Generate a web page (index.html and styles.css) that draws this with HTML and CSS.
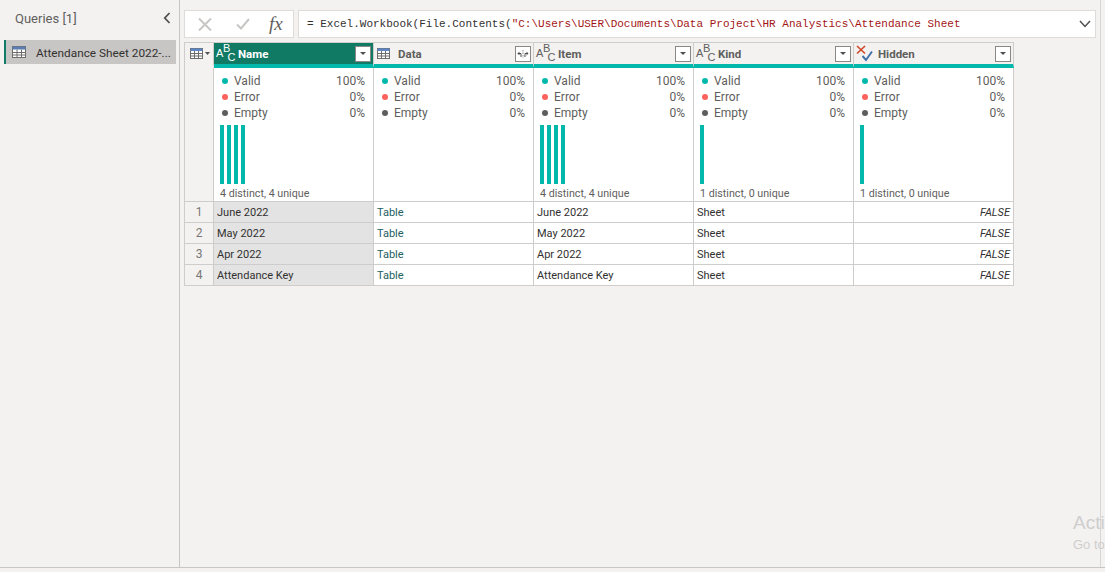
FILE: index.html
```html
<!DOCTYPE html>
<html lang="en">
<head>
  <meta charset="UTF-8" />
  <title>Power Query Editor</title>
  <link rel="stylesheet" href="styles.css">
</head>
<body>

  <div class="editor">
    <aside class="queries">
      <div class="queries-head">
        <span>Queries [1]</span>
        <svg class="collapse" width="8" height="12" viewBox="0 0 8 12"><path d="M6.5 1 L1.8 6 L6.5 11" fill="none" stroke="#505050" stroke-width="1.8"/></svg>
      </div>
      <div class="query-item">
        <svg class="table-icon" width="14" height="12" viewBox="0 0 14 12"><rect x="0.5" y="0.5" width="13" height="11" fill="#fff" stroke="#6d6d6d"/><rect x="0.5" y="0.5" width="13" height="3" fill="#5b7db1"/><path d="M0.5 6.5H13.5M0.5 9H13.5M5 3.5V11.5M9.5 3.5V11.5" stroke="#6d6d6d" stroke-width="1" fill="none"/></svg>
        <span class="query-name">Attendance Sheet 2022-...</span>
      </div>
    </aside>

    <main class="content">
      <div class="formula-bar">
        <div class="formula-buttons">
          <svg class="btn-cancel" width="14" height="13" viewBox="0 0 14 13"><path d="M1 0.5 L13 12.5 M13 0.5 L1 12.5" stroke="#c8c6c4" stroke-width="2"/></svg>
          <svg class="btn-ok" width="14" height="12" viewBox="0 0 14 12"><path d="M1 6.5 L5 10.5 L13 1" fill="none" stroke="#c8c6c4" stroke-width="2"/></svg>
          <span class="fx">fx</span>
        </div>
        <div class="formula-input">
          <span class="formula-text">= Excel.Workbook(File.Contents(<span class="str">"C:\Users\USER\Documents\Data Project\HR Analystics\Attendance Sheet</span></span>
          <svg width="12" height="8" viewBox="0 0 12 8"><path d="M1 1 L6 6.5 L11 1" fill="none" stroke="#505050" stroke-width="1.5"/></svg>
        </div>
      </div>

      <div class="grid">
        <!-- header row -->
        <div class="corner">
          <svg width="13" height="11" viewBox="0 0 13 11"><rect x="0.5" y="0.5" width="12" height="10" fill="#fff" stroke="#6d6d6d"/><rect x="0.5" y="0.5" width="12" height="2.5" fill="#5f86c4"/><path d="M0.5 5.5H12.5M0.5 8H12.5M4.5 3V10.5M8.5 3V10.5" stroke="#6d6d6d" fill="none"/></svg>
          <svg width="5" height="3" viewBox="0 0 5 3"><path d="M0 0H5L2.5 3Z" fill="#505050"/></svg>
        </div>
        <div class="col-head selected">
          <span class="abc"><i>A</i><i class="b">B</i><i class="c">C</i></span>
          <span class="col-name">Name</span>
          <span class="filter"><b></b></span>
        </div>
        <div class="col-head">
          <svg class="type-icon" width="13" height="11" viewBox="0 0 13 11"><rect x="0.5" y="0.5" width="12" height="10" fill="#fff" stroke="#6d6d6d"/><rect x="0.5" y="0.5" width="12" height="2.5" fill="#5f86c4"/><path d="M0.5 5.5H12.5M0.5 8H12.5M4.5 3V10.5M8.5 3V10.5" stroke="#6d6d6d" fill="none"/></svg>
          <span class="col-name">Data</span>
          <span class="filter expand">
            <svg width="12" height="8" viewBox="0 0 12 8"><path d="M4 7V3.5H1M2.6 1.9L1 3.5L2.6 5.1M8 7V3.5H11M9.4 1.9L11 3.5L9.4 5.1" fill="none" stroke="#505050"/><path d="M6 0V8" stroke="#8a8886" stroke-dasharray="1.5 1"/></svg>
          </span>
        </div>
        <div class="col-head">
          <span class="abc"><i>A</i><i class="b">B</i><i class="c">C</i></span>
          <span class="col-name">Item</span>
          <span class="filter"><b></b></span>
        </div>
        <div class="col-head">
          <span class="abc"><i>A</i><i class="b">B</i><i class="c">C</i></span>
          <span class="col-name">Kind</span>
          <span class="filter"><b></b></span>
        </div>
        <div class="col-head">
          <svg class="bool" width="17" height="17" viewBox="0 0 17 17"><path d="M1 1 L9 8.5 M9 1 L1 8.5" stroke="#d2492a" stroke-width="1.7"/><path d="M6.5 11 L10 15 L16 6.5" fill="none" stroke="#3f6fa8" stroke-width="1.9"/></svg>
          <span class="col-name">Hidden</span>
          <span class="filter"><b></b></span>
        </div>

        <!-- profile row -->
        <div class="row-num"></div>
        <div class="profile">
          <div class="quality"><span class="dot valid"></span>Valid<em>100%</em></div>
          <div class="quality"><span class="dot error"></span>Error<em>0%</em></div>
          <div class="quality"><span class="dot empty"></span>Empty<em>0%</em></div>
          <div class="bars"><s></s><s></s><s></s><s></s></div>
          <div class="distinct">4 distinct, 4 unique</div>
        </div>
        <div class="profile">
          <div class="quality"><span class="dot valid"></span>Valid<em>100%</em></div>
          <div class="quality"><span class="dot error"></span>Error<em>0%</em></div>
          <div class="quality"><span class="dot empty"></span>Empty<em>0%</em></div>
        </div>
        <div class="profile">
          <div class="quality"><span class="dot valid"></span>Valid<em>100%</em></div>
          <div class="quality"><span class="dot error"></span>Error<em>0%</em></div>
          <div class="quality"><span class="dot empty"></span>Empty<em>0%</em></div>
          <div class="bars"><s></s><s></s><s></s><s></s></div>
          <div class="distinct">4 distinct, 4 unique</div>
        </div>
        <div class="profile">
          <div class="quality"><span class="dot valid"></span>Valid<em>100%</em></div>
          <div class="quality"><span class="dot error"></span>Error<em>0%</em></div>
          <div class="quality"><span class="dot empty"></span>Empty<em>0%</em></div>
          <div class="bars"><s></s></div>
          <div class="distinct">1 distinct, 0 unique</div>
        </div>
        <div class="profile">
          <div class="quality"><span class="dot valid"></span>Valid<em>100%</em></div>
          <div class="quality"><span class="dot error"></span>Error<em>0%</em></div>
          <div class="quality"><span class="dot empty"></span>Empty<em>0%</em></div>
          <div class="bars"><s></s></div>
          <div class="distinct">1 distinct, 0 unique</div>
        </div>

        <!-- data rows -->
        <div class="row-num">1</div>
        <div class="cell name">June 2022</div>
        <div class="cell link">Table</div>
        <div class="cell">June 2022</div>
        <div class="cell">Sheet</div>
        <div class="cell bool-val">FALSE</div>

        <div class="row-num">2</div>
        <div class="cell name">May 2022</div>
        <div class="cell link">Table</div>
        <div class="cell">May 2022</div>
        <div class="cell">Sheet</div>
        <div class="cell bool-val">FALSE</div>

        <div class="row-num">3</div>
        <div class="cell name">Apr 2022</div>
        <div class="cell link">Table</div>
        <div class="cell">Apr 2022</div>
        <div class="cell">Sheet</div>
        <div class="cell bool-val">FALSE</div>

        <div class="row-num">4</div>
        <div class="cell name">Attendance Key</div>
        <div class="cell link">Table</div>
        <div class="cell">Attendance Key</div>
        <div class="cell">Sheet</div>
        <div class="cell bool-val">FALSE</div>
      </div>
    </main>
  </div>

  <div class="watermark">
    <div class="wm-title">Acti</div>
    <div class="wm-sub">Go to</div>
  </div>

</body>
</html>
```

FILE: styles.css
```css
* {
  box-sizing: border-box;
}

html,
body {
  height: 100%;
}

body {
  margin: 0;
  background: #f3f2f1;
  font-family: Roboto, 'Liberation Sans', sans-serif;
  font-size: 11px;
  color: #323130;
  overflow: hidden;
}

.editor {
  display: flex;
  height: 568px;
  border-bottom: 1px solid #c8c6c4;
}

/* queries pane */
.queries {
  width: 180px;
  flex-shrink: 0;
  border-right: 1px solid #c8c6c4;
  padding-left: 4px;
  padding-right: 3px;
}

.queries-head {
  display: flex;
  justify-content: space-between;
  align-items: center;
  height: 40px;
  padding: 0 5px 4px 11px;
  font-size: 13px;
  color: #605e5c;
}

.query-item {
  display: flex;
  align-items: center;
  gap: 10px;
  height: 24px;
  padding-left: 6px;
  background: #c8c6c4;
  border-left: 2px solid #107c68;
  font-size: 11.8px;
  white-space: nowrap;
}

.query-name {
  padding-top: 1px;
}

.table-icon {
  flex-shrink: 0;
}

/* formula bar */
.content {
  flex: 1;
  padding: 10px 4px 0 4px;
  border-right: 1px solid #d8d6d4;
  margin-right: 4px;
}

.formula-bar {
  display: flex;
  gap: 4px;
  height: 28px;
  margin-bottom: 4px;
}

.formula-buttons {
  display: flex;
  align-items: center;
  width: 110px;
  padding-left: 13px;
  background: #fff;
  border: 1px solid #dedcda;
}

.btn-ok {
  margin-left: 24px;
}

.fx {
  margin-left: 19px;
  font-family: 'Liberation Serif', serif;
  font-style: italic;
  font-size: 19px;
  color: #605e5c;
}

.formula-input {
  flex: 1;
  display: flex;
  justify-content: space-between;
  align-items: center;
  padding: 0 4px 0 8px;
  background: #fff;
  border: 1px solid #dedcda;
}

.formula-text {
  font-family: 'Liberation Mono', monospace;
  font-size: 11px;
  white-space: pre;
}

.str {
  color: #a31515;
}

/* table */
.grid {
  display: grid;
  grid-template-columns: 29px repeat(5, 160px);
  grid-template-rows: 25px 134px repeat(4, 21px);
  width: 830px;
  border-top: 1px solid #cfcdcb;
  border-left: 1px solid #cfcdcb;
}

.corner {
  display: flex;
  align-items: center;
  gap: 2px;
  padding: 0 0 0 5px;
  border-right: 1px solid #cfcdcb;
  border-bottom: 4px solid #f3f2f1;
}

.col-head {
  display: flex;
  align-items: center;
  padding: 0 2px;
  border-right: 1px solid #cfcdcb;
  border-bottom: 4px solid #01b8aa;
  color: #605e5c;
  font-weight: 700;
  font-size: 11.5px;
}

.col-head.selected {
  background: #107a65;
  color: #fff;
}

.col-name {
  flex: 1;
  margin-left: 5px;
}

.abc {
  display: flex;
  width: 17px;
  height: 20px;
  font-family: 'Liberation Sans', sans-serif;
  font-size: 11px;
  font-weight: 400;
  color: #605e5c;
}

.selected .abc {
  color: #fff;
}

.abc i {
  font-style: normal;
  line-height: 9px;
  height: 9px;
  width: 7px;
  margin-top: 5.5px;
}

.abc .b {
  margin-top: 0.5px;
  width: 4.5px;
}

.abc .c {
  margin-top: 9.5px;
  width: 6px;
}

.type-icon {
  margin-left: 1px;
  margin-right: 3px;
}

.bool {
  margin-bottom: 1px;
}

.filter {
  display: flex;
  align-items: center;
  justify-content: center;
  width: 16px;
  height: 16px;
  background: #fff;
  border: 1px solid #8a8886;
}

.filter b {
  width: 0;
  height: 0;
  border-left: 3px solid transparent;
  border-right: 3px solid transparent;
  border-top: 3px solid #505050;
}

/* column profile */
.row-num {
  display: flex;
  align-items: center;
  justify-content: center;
  font-size: 12px;
  color: #797775;
  border-right: 1px solid #cfcdcb;
  border-bottom: 1px solid #cfcdcb;
}

.profile {
  display: flex;
  flex-direction: column;
  padding: 5px 8px 0 6px;
  background: #fff;
  border-right: 1px solid #cfcdcb;
  border-bottom: 1px solid #cfcdcb;
  color: #605e5c;
}

.quality {
  display: flex;
  align-items: center;
  height: 16px;
  font-size: 12px;
}

.quality em {
  margin-left: auto;
  font-style: normal;
}

.dot {
  width: 6px;
  height: 6px;
  margin: 0 6px 0 2px;
  border-radius: 50%;
}

.valid {
  background: #01b8aa;
}

.error {
  background: #fd625e;
}

.empty {
  background: #605e5c;
}

.bars {
  display: flex;
  gap: 3px;
  height: 59px;
  margin-top: 4px;
}

.bars s {
  width: 4px;
  background: #01b8aa;
}

.distinct {
  margin-top: 3px;
  font-size: 10.7px;
}

/* data cells */
.cell {
  display: flex;
  align-items: center;
  padding-left: 3px;
  background: #fff;
  border-right: 1px solid #cfcdcb;
  border-bottom: 1px solid #cfcdcb;
}

.cell.name {
  background: #e3e3e3;
}

.cell.link {
  color: #24605f;
}

.bool-val {
  justify-content: flex-end;
  padding-right: 3px;
  font-style: italic;
}

/* windows activation notice */
.watermark {
  position: absolute;
  left: 1073px;
  top: 511px;
  color: #cfcecd;
  font-family: 'Liberation Sans', sans-serif;
  white-space: nowrap;
}

.wm-title {
  font-size: 19px;
  line-height: 24px;
}

.wm-sub {
  font-size: 13px;
  line-height: 20px;
}
```
